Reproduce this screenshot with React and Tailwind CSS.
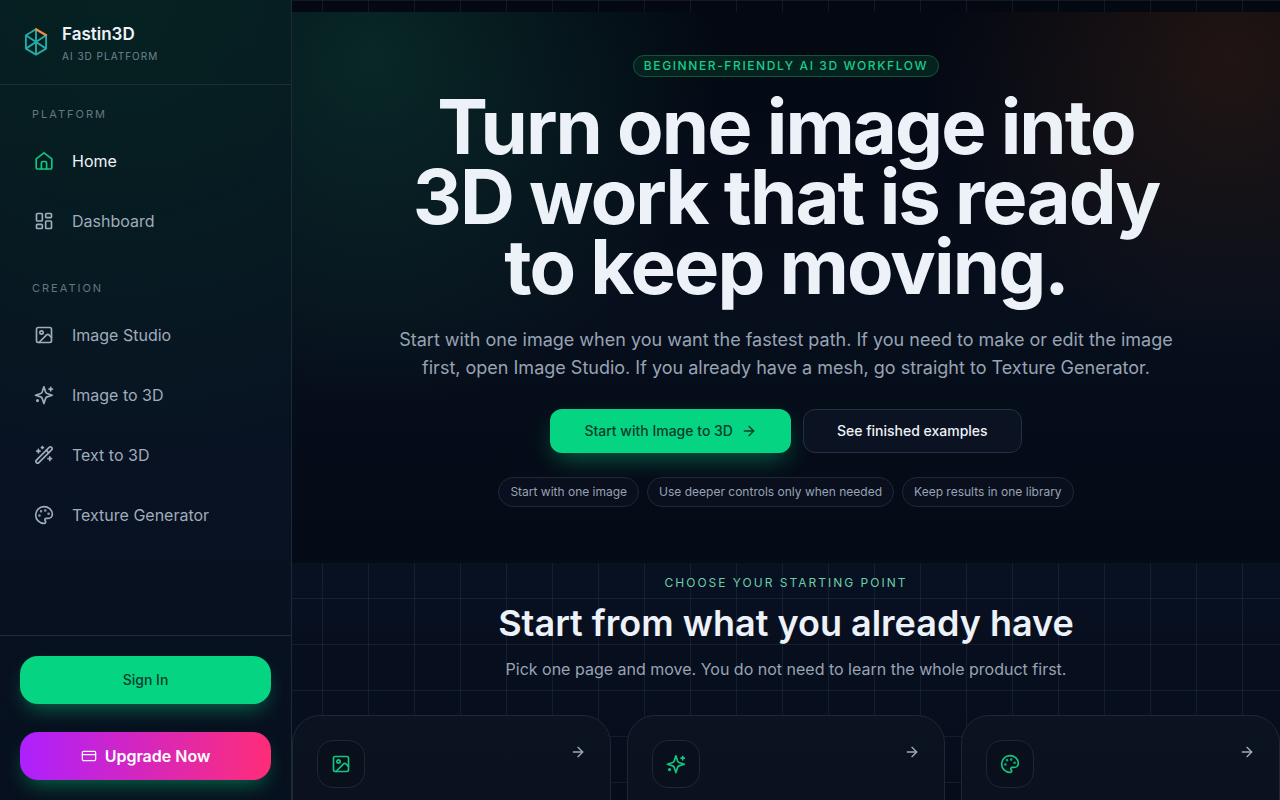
import React from "react";
import { ArrowRight, CreditCard, Image, LayoutDashboard, Palette } from "lucide-react";

const navGroups = [
  {
    title: "Platform",
    items: [
      { label: "Home", icon: HomeIcon, active: true },
      { label: "Dashboard", icon: LayoutDashboard },
    ],
  },
  {
    title: "Creation",
    items: [
      { label: "Image Studio", icon: Image },
      { label: "Image to 3D", icon: Sparkle },
      { label: "Text to 3D", icon: Wand },
      { label: "Texture Generator", icon: Palette },
    ],
  },
];

const chips = [
  "Start with one image",
  "Use deeper controls only when needed",
  "Keep results in one library",
];

const startCards = [
  { label: "Image Studio", icon: Image },
  { label: "Image to 3D", icon: Sparkle },
  { label: "Texture Generator", icon: Palette },
];

function Svg({ size = 20, children }) {
  return (
    <svg
      width={size}
      height={size}
      viewBox="0 0 20 20"
      fill="none"
      stroke="currentColor"
      strokeWidth="1.7"
      strokeLinecap="round"
      strokeLinejoin="round"
      aria-hidden="true"
    >
      {children}
    </svg>
  );
}

function HomeIcon({ size }) {
  return (
    <Svg size={size}>
      <path d="M2.2 7.8 10 1.8l7.8 6v9a1.2 1.2 0 0 1-1.2 1.2H3.4a1.2 1.2 0 0 1-1.2-1.2z" />
      <path d="M7.4 18v-6a1.5 1.5 0 0 1 1.5-1.5h2.2a1.5 1.5 0 0 1 1.5 1.5v6" />
    </Svg>
  );
}

function Sparkle({ size }) {
  return (
    <Svg size={size}>
      <path d="M9.9 1.8 11.6 7Q12 8.1 13.1 8.5L18.3 10.2 13.1 11.9Q12 12.3 11.6 13.4L9.9 18.6 8.2 13.4Q7.8 12.3 6.7 11.9L1.5 10.2 6.7 8.5Q7.8 8.1 8.2 7Z" />
      <path d="M16.7 2.4v3.4M15 4.1h3.4" />
      <circle cx="3.5" cy="15.6" r=".7" fill="currentColor" />
    </Svg>
  );
}

function Wand({ size }) {
  return (
    <Svg size={size}>
      <path d="M2.2 15.4 15.4 2.2a1.3 1.3 0 0 1 1.9 0l.5.5a1.3 1.3 0 0 1 0 1.9L4.6 17.8a1.3 1.3 0 0 1-1.9 0l-.5-.5a1.3 1.3 0 0 1 0-1.9z" />
      <path d="m12.3 5.3 2.4 2.4M4.4 4.4v3.4M2.7 6.1h3.4M8.4 1.5v2M7.4 2.5h2M15.8 11.8v3.6M14 13.6h3.6" />
    </Svg>
  );
}

function Logo() {
  return (
    <svg
      width="32"
      height="32"
      viewBox="0 0 32 32"
      fill="none"
      strokeWidth="1.9"
      strokeLinejoin="round"
      strokeLinecap="round"
      aria-hidden="true"
    >
      <path
        d="M16 3.2 5.9 9.2v13.4L16 28.6l10.1-6V9.2M16 3.2v25.4M5.9 9.2l20.2 13.4M26.1 9.2 5.9 22.6"
        stroke="#22aaa5"
      />
      <path d="m16 3.2 10.1 6" stroke="#f08a4b" strokeWidth="2.2" />
    </svg>
  );
}

function Sidebar() {
  return (
    <aside className="flex h-full w-[292px] shrink-0 flex-col border-r border-[#1d2b36] bg-[radial-gradient(circle_at_45%_0%,rgba(4,38,32,0.7),transparent_460px),linear-gradient(180deg,#081722_0%,#081222_60%,#07101e_100%)]">
      <div className="flex h-[85px] items-center gap-[10px] border-b border-[#1b2f34] px-5">
        <Logo />
        <div className="pt-1">
          <p className="text-[17px] leading-6 font-semibold text-[#eef3fa]">Fastin3D</p>
          <p className="text-[10px] leading-5 tracking-[1px] text-[#718391] uppercase">
            AI 3D Platform
          </p>
        </div>
      </div>

      <nav className="flex flex-1 flex-col gap-[35px] px-5 pt-[21px]">
        {navGroups.map((group) => (
          <div key={group.title}>
            <h2 className="mb-[15px] px-3 text-[11px] leading-4 tracking-[2px] text-[#65767f] uppercase">
              {group.title}
            </h2>
            <ul className="flex flex-col gap-3">
              {group.items.map(({ label, icon: Icon, active }) => (
                <li key={label}>
                  <a
                    href="#"
                    className={
                      active
                        ? "flex h-12 items-center gap-[18px] px-[14px] text-base text-[#eef3fa]"
                        : "flex h-12 items-center gap-[18px] px-[14px] text-base text-[#a0abbb]"
                    }
                  >
                    <span className={active ? "text-[#10c680]" : ""}>
                      <Icon size={20} strokeWidth={2} />
                    </span>
                    {label}
                  </a>
                </li>
              ))}
            </ul>
          </div>
        ))}
      </nav>

      <div className="flex flex-col gap-7 border-t border-[#202b39] p-5">
        <button className="h-12 rounded-[18px] bg-[#05d482] text-sm font-medium text-[#053c2b] shadow-[0_10px_20px_-6px_rgba(5,212,130,0.45)]">
          Sign In
        </button>
        <button className="flex h-12 items-center justify-center gap-2 rounded-[18px] bg-[linear-gradient(90deg,#ad20ff,#ff2d78)] text-base font-semibold text-white shadow-[0_10px_20px_-6px_rgba(5,212,130,0.45)]">
          <CreditCard size={16} strokeWidth={1.8} />
          Upgrade Now
        </button>
      </div>
    </aside>
  );
}

function Hero() {
  return (
    <section className="mt-3 flex flex-col items-center bg-[radial-gradient(circle_at_8%_8%,rgba(16,90,70,0.38),transparent_350px),radial-gradient(circle_at_95%_8%,rgba(100,48,18,0.3),transparent_300px),linear-gradient(180deg,#030812_0%,#070f1c_54%,#040a16_100%)] px-6 pt-[43px] pb-14 text-center">
      <p className="rounded-full border border-[#14543f] bg-[#04231f] px-[10px] text-xs leading-5 font-medium tracking-[1.6px] text-[#1bcb8b] uppercase">
        Beginner-friendly AI 3D workflow
      </p>
      <h1 className="mt-[14px] text-[76px] leading-[70px] font-bold tracking-tight text-[#edf1f8]">
        Turn one image into
        <br />
        3D work that is ready
        <br />
        to keep moving.
      </h1>
      <p className="mt-[25px] text-lg leading-7 text-[#98a3b3]">
        Start with one image when you want the fastest path. If you need to make or edit the image
        <br />
        first, open Image Studio. If you already have a mesh, go straight to Texture Generator.
      </p>
      <div className="mt-[27px] flex gap-3">
        <button className="flex h-11 items-center gap-2 rounded-xl bg-[#05d482] px-[34px] text-sm font-medium text-[#053c2b] shadow-[0_10px_24px_-6px_rgba(5,212,130,0.45)]">
          Start with Image to 3D
          <ArrowRight size={16} />
        </button>
        <button className="h-11 rounded-xl border border-[#263040] bg-[#0b1322] px-[33px] text-sm font-medium text-[#edf1f8]">
          See finished examples
        </button>
      </div>
      <ul className="mt-6 flex gap-2">
        {chips.map((chip) => (
          <li
            key={chip}
            className="rounded-full border border-[#202938] bg-[#090f1d] px-[11px] text-xs leading-7 text-[#98a3b3]"
          >
            {chip}
          </li>
        ))}
      </ul>
    </section>
  );
}

function StartingPoints() {
  return (
    <section className="text-center">
      <p className="mt-[10px] text-xs leading-5 tracking-[2px] text-[#69cfa9] uppercase">
        Choose your starting point
      </p>
      <h2 className="mt-2 text-4xl leading-[44px] font-semibold text-[#edf1f8]">
        Start from what you already have
      </h2>
      <p className="mt-3 text-base leading-6 text-[#98a3b3]">
        Pick one page and move. You do not need to learn the whole product first.
      </p>
      <div className="mt-[34px] grid grid-cols-3 gap-4">
        {startCards.map(({ label, icon: Icon }) => (
          <a
            key={label}
            href="#"
            aria-label={label}
            className="flex min-h-60 items-start justify-between rounded-[28px] border border-[#1f2735] bg-linear-to-b from-[#0c1320] to-[#090f1b] p-6"
          >
            <span className="flex size-12 items-center justify-center rounded-2xl border border-[#1f2735] bg-[#090f1b] text-[#10c680]">
              <Icon size={20} strokeWidth={2} />
            </span>
            <ArrowRight size={16} className="mt-1 text-[#a0abbb]" />
          </a>
        ))}
      </div>
    </section>
  );
}

const App = () => {
  return (
    <div className="h-screen bg-[linear-gradient(180deg,#030811_0%,#081122_70%,#060c1a_100%)]">
      <div className="flex h-full overflow-hidden bg-[linear-gradient(rgba(148,163,184,0.1)_1px,transparent_1px),linear-gradient(90deg,rgba(148,163,184,0.1)_1px,transparent_1px)] bg-size-[46px_46px] font-['Inter',sans-serif]">
        <Sidebar />
        <main className="min-w-0 flex-1 overflow-hidden">
          <Hero />
          <StartingPoints />
        </main>
      </div>
    </div>
  );
};

export default App;
